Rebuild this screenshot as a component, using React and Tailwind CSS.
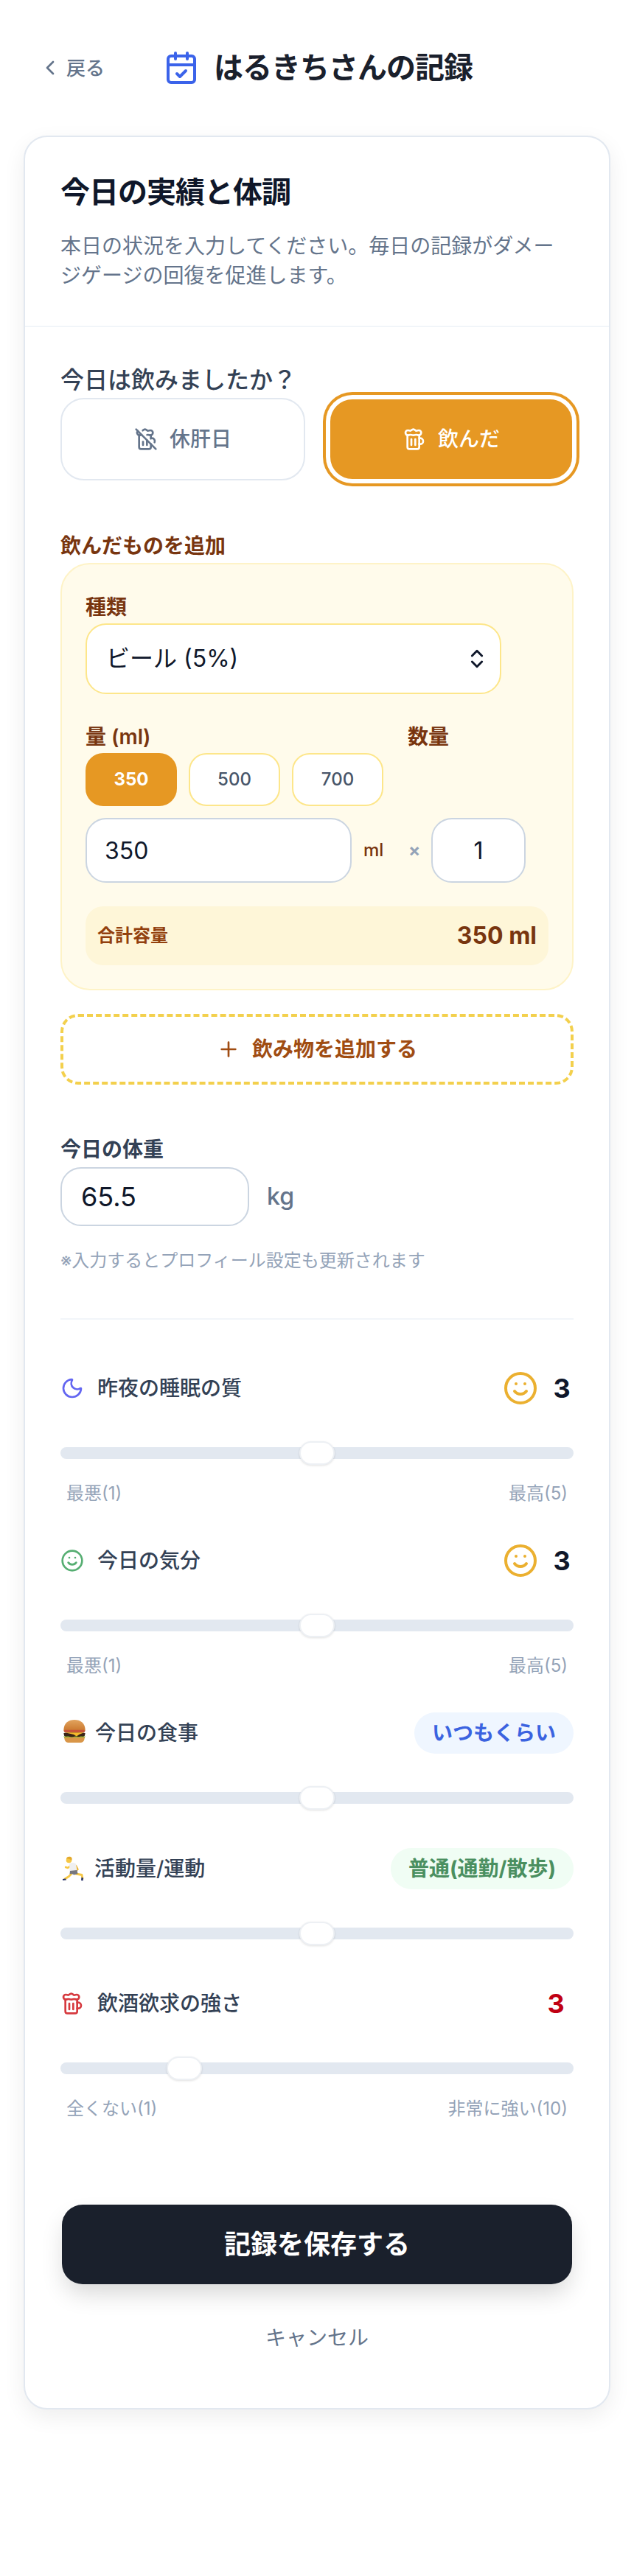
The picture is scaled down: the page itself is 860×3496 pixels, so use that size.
import React from 'react';
import { BeerOff, Beer, CalendarCheck, ChevronLeft, ChevronsUpDown, Moon, Plus, Smile } from 'lucide-react';

function Burger() {
  return (
    <svg width="32" height="33" viewBox="0 0 34 36" className="mb-[6px] ml-[3px] shrink-0">
      <defs>
        <linearGradient id="bun" x1="0" y1="0" x2="0" y2="1">
          <stop offset="0" stopColor="#e2a45f" />
          <stop offset="1" stopColor="#c9762c" />
        </linearGradient>
      </defs>
      <path d="M1 17C1 6 8 1 17 1s16 5 16 16c0 1-1 1-2 1H3c-1 0-2 0-2-1z" fill="url(#bun)" />
      <rect x="1.5" y="16" width="31" height="4" rx="2" fill="#c9543a" />
      <path d="M1 21c3-2 29-2 32 0l-1 4c-3 3-27 3-30 0z" fill="#3a2418" />
      <path d="M3 20h28l-7 3-4 2.500-4-2.500z" fill="#f5b92c" />
      <path d="M1 25c3 2 5 0 8 1s5 1 8 0 5 1 8 0 5 1 8-1l-1 3H2z" fill="#86b82f" />
      <path d="M2 27h30c0 6-3 8-7 8H9c-4 0-7-2-7-8z" fill="#d99648" />
    </svg>
  );
}

function Runner() {
  return (
    <svg width="32" height="36" viewBox="0 0 32 36" className="shrink-0">
      <path d="M14 14l-4 3-3-1" fill="none" stroke="#f6c744" strokeWidth="2.400" strokeLinecap="round" strokeLinejoin="round" />
      <path d="M21 14l2.500 5-3 2" fill="none" stroke="#e9b436" strokeWidth="2.400" strokeLinecap="round" strokeLinejoin="round" />
      <path d="M15 25l-3.500 3.500L6 32" fill="none" stroke="#f6c744" strokeWidth="2.800" strokeLinecap="round" strokeLinejoin="round" />
      <path d="M21 25l8 1.500 1 5" fill="none" stroke="#f6c744" strokeWidth="2.800" strokeLinecap="round" strokeLinejoin="round" />
      <circle cx="11.500" cy="6.500" r="3.800" fill="#f6c744" />
      <path d="M8 5c0-3 3-4 6-3 2 1 2 3 1 5-2-2-5-3-7-2z" fill="#e3a92c" />
      <path d="M12 11c3-1.500 7-1 9 .5l1.500 9-10 1z" fill="#efeff0" />
      <path d="M13 21l9.500-1 1 5-5 1.500-3-1.500-3 .5z" fill="#77777f" />
      <path d="M3 32l4-.5 1 2-5 .5z" fill="#27336b" />
      <path d="M28.500 30l2.500.5-.5 4-2.500-.5z" fill="#27336b" />
    </svg>
  );
}

function Slider({ value, min, max }) {
  const pct = (value - min) / (max - min);
  return (
    <div className="relative h-4 rounded-full bg-[#e2e8f0]">
      <div
        className="absolute top-[-8px] h-8 w-12 rounded-2xl border-2 border-[#edf0f4] bg-white shadow-[0_1px_3px_rgba(0,0,0,0.12)]"
        style={{ left: `${pct * 648}px` }}
      />
    </div>
  );
}

function RangeLabels({ left, right, className }) {
  return (
    <div className={`flex h-10 items-center justify-between px-2 text-2xl leading-10 text-[#94a3b8] ${className}`}>
      <span>{left}</span>
      <span>{right}</span>
    </div>
  );
}

function Row({ icon, label, gap, right, className }) {
  return (
    <div className={`flex items-center justify-between ${className}`}>
      <div className={`flex items-center ${gap} text-[28px] font-medium leading-10 text-[#334155]`}>
        {icon}
        <span>{label}</span>
      </div>
      {right}
    </div>
  );
}

function Score() {
  return (
    <div className="flex items-center gap-[16px]">
      <Smile size={48} strokeWidth={2} className="text-[#ebb030]" />
      <span className="w-8 text-center text-4xl font-bold text-[#0f172a]">3</span>
    </div>
  );
}

export default function App() {
  return (
    <div className="min-h-[3496px] overflow-hidden bg-white font-['Inter','Noto_Sans_CJK_JP',sans-serif]">
      <header className="flex h-[184px] items-center">
        <div className="ml-[52px] flex w-[170px] items-center gap-[6px] text-[26px] font-medium text-[#64748b]">
          <ChevronLeft size={32} strokeWidth={2} />
          <span>戻る</span>
        </div>
        <div className="flex items-center gap-[20px]">
          <CalendarCheck size={48} strokeWidth={2} className="text-[#3b63ea]" />
          <h1 className="text-[40px] font-bold leading-[56px] tracking-[-1px] text-[#1a202c]">はるきちさんの記録</h1>
        </div>
      </header>

      <main className="mx-8 rounded-[32px] border-2 border-[#e2e8f0] bg-white shadow-[0_10px_30px_rgba(0,0,0,0.07)]">
        <div className="border-b-2 border-[#f1f5f9] px-12 pb-12 pt-[47px]">
          <h2 className="text-[40px] font-bold leading-[56px] tracking-[-1px] text-[#0f172a]">今日の実績と体調</h2>
          <p className="mt-[25px] text-[28px] leading-10 text-[#64748b]">
            本日の状況を入力してください。毎日の記録がダメージゲージの回復を促進します。
          </p>
        </div>

        <div className="px-12 pb-[75px] pt-12">
          <div className="text-[32px] font-medium leading-[48px] text-[#334155]">今日は飲みましたか？</div>
          <div className="grid grid-cols-2 gap-8">
            <button className="flex h-28 items-center justify-center gap-4 rounded-[32px] border-2 border-[#e2e8f0] bg-white text-[28px] font-medium text-[#64748b]">
              <BeerOff size={32} strokeWidth={2} />
              休肝日
            </button>
            <button className="flex h-28 items-center justify-center gap-4 rounded-[32px] border-2 border-white bg-[#e69823] text-[28px] font-medium text-white shadow-[0_0_0_4px_#ffffff,0_0_0_8px_#e69823]">
              <Beer size={32} strokeWidth={2} />
              飲んだ
            </button>
          </div>

          <div className="mt-[69px] mb-[3px] text-[28px] font-bold leading-10 text-[#78350f]">飲んだものを追加</div>
          <section className="rounded-[40px] border-2 border-[#fef3c7] bg-[#fffbeb] px-8 pb-8 pt-[38px]">
            <div className="mb-[2px] text-[28px] font-semibold leading-10 text-[#78350f]">種類</div>
            <div className="relative w-[564px]">
              <select className="h-24 w-full appearance-none rounded-[28px] border-2 border-[#fde68a] bg-white px-[26px] text-[32px] text-[#0f172a]">
                <option>ビール (5%)</option>
              </select>
              <ChevronsUpDown size={32} strokeWidth={2.2} className="absolute right-[17px] top-8 text-[#0f172a]" />
            </div>

            <div className="mt-[38px] flex">
              <div className="w-[437px]">
                <div className="mb-[2px] text-[28px] font-semibold leading-10 text-[#78350f]">量 (ml)</div>
                <div className="flex gap-4">
                  <button className="h-[72px] w-[124px] rounded-3xl border-2 border-[#e69823] bg-[#e69823] text-2xl font-bold text-white">350</button>
                  <button className="h-[72px] w-[124px] rounded-3xl border-2 border-[#fde68a] bg-white text-2xl font-medium text-[#475569]">500</button>
                  <button className="h-[72px] w-[124px] rounded-3xl border-2 border-[#fde68a] bg-white text-2xl font-medium text-[#475569]">700</button>
                </div>
              </div>
              <div className="text-[28px] font-semibold leading-10 text-[#78350f]">数量</div>
            </div>

            <div className="mt-4 flex items-center">
              <input readOnly value="350" className="h-[88px] w-[361px] rounded-[28px] border-2 border-[#cbd5e1] bg-white px-[24px] text-[32px] text-[#0f172a]" />
              <span className="ml-[16px] w-[61px] text-2xl font-medium text-[#78350f]">ml</span>
              <span className="w-[31px] text-2xl font-bold text-[#94a3b8]">×</span>
              <input readOnly value="1" className="h-[88px] w-[128px] rounded-[28px] border-2 border-[#cbd5e1] bg-white text-center text-[32px] text-[#0f172a]" />
            </div>

            <div className="mt-8 flex h-20 items-center justify-between rounded-3xl bg-[#fef6d8] px-4">
              <span className="text-2xl font-bold text-[#92400e]">合計容量</span>
              <span className="text-[32px] font-bold text-[#78350f]">350 ml</span>
            </div>
          </section>

          <button className="mt-8 flex h-24 w-full items-center justify-center gap-4 rounded-3xl border-4 border-dashed border-[#f3d04d] bg-white text-[28px] font-bold text-[#a04c12]">
            <Plus size={32} strokeWidth={2} />
            飲み物を追加する
          </button>

          <div className="mt-[68px] mb-1 text-[28px] font-bold leading-10 text-[#334155]">今日の体重</div>
          <div className="flex items-center">
            <input readOnly value="65.5" className="h-20 w-64 rounded-[28px] border-2 border-[#cbd5e1] bg-white px-[26px] text-4xl text-[#0f172a]" />
            <span className="ml-[24px] text-[32px] font-medium text-[#64748b]">kg</span>
          </div>
          <div className="mt-[27px] text-2xl leading-10 text-[#94a3b8]">※入力するとプロフィール設定も更新されます</div>
          <div className="mt-[58px] h-[2px] bg-[#f1f5f9]" />

          <Row
            className="mt-[69px] h-12"
            gap="gap-[18px]"
            icon={<Moon size={32} strokeWidth={2} className="text-[#6366f1]" />}
            label="昨夜の睡眠の質"
            right={<Score />}
          />
          <div className="mt-14"><Slider value={3} min={1} max={5} /></div>
          <RangeLabels className="mt-[27px]" left="最悪(1)" right="最高(5)" />

          <Row
            className="mt-[47px] h-12"
            gap="gap-[18px]"
            icon={<Smile size={32} strokeWidth={2} className="text-[#56ae72]" />}
            label="今日の気分"
            right={<Score />}
          />
          <div className="mt-14"><Slider value={3} min={1} max={5} /></div>
          <RangeLabels className="mt-[27px]" left="最悪(1)" right="最高(5)" />

          <Row
            className="mt-[43px] h-14"
            gap="gap-[12px]"
            icon={<Burger />}
            label="今日の食事"
            right={<span className="flex h-14 items-center rounded-full bg-[#eff6ff] px-6 text-[28px] font-bold text-[#3b63e0]">いつもくらい</span>}
          />
          <div className="mt-[52px]"><Slider value={3} min={1} max={5} /></div>

          <Row
            className="mt-[60px] h-14"
            gap="gap-[14px]"
            icon={<Runner />}
            label="活動量/運動"
            right={<span className="flex h-14 items-center rounded-full bg-[#f0fdf4] px-6 text-[28px] font-bold text-[#4a8f60]">普通(通勤/散歩)</span>}
          />
          <div className="mt-[52px]"><Slider value={3} min={1} max={5} /></div>

          <Row
            className="mt-[63px] h-12"
            gap="gap-[18px]"
            icon={<Beer size={32} strokeWidth={2} className="text-[#d63a3f]" />}
            label="飲酒欲求の強さ"
            right={<span className="w-12 text-center text-4xl font-bold text-[#c00013]">3</span>}
          />
          <div className="mt-14"><Slider value={3} min={1} max={10} /></div>
          <RangeLabels className="mt-[27px]" left="全くない(1)" right="非常に強い(10)" />

          <button className="mx-[2px] mt-[110px] block h-[108px] w-[692px] rounded-[28px] bg-[#1a202c] text-4xl font-bold text-white shadow-[0_16px_32px_-4px_rgba(0,0,0,0.16)]">
            記録を保存する
          </button>
          <div className="mt-[53px] text-center text-[28px] leading-10 text-[#64748b]">キャンセル</div>
        </div>
      </main>
    </div>
  );
}
